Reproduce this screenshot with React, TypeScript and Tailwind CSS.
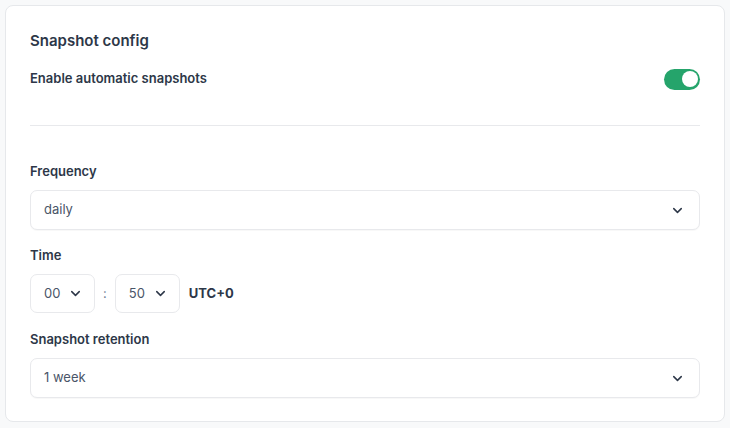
import React from "react";

function Chevron({ className = "" }: { className?: string }) {
  return (
    <svg width="15" height="15" viewBox="0 0 24 24" fill="none" stroke="#2d3748" strokeWidth="2.4" strokeLinecap="round" strokeLinejoin="round" className={className}>
      <path d="m6 9 6 6 6-6" />
    </svg>
  );
}

function Select({ value }: { value: string }) {
  return (
    <div className="flex h-[40px] items-center justify-between rounded-[7px] border border-[#e8e9ec] bg-white pl-[13px] pr-[14px] text-[13px] text-[#4a5568] shadow-[0_1px_1px_rgba(0,0,0,0.03)]">
      <span>{value}</span>
      <Chevron />
    </div>
  );
}

function SmallSelect({ value }: { value: string }) {
  return (
    <div className="flex h-[39px] w-[65px] items-center gap-[8px] rounded-[7px] border border-[#e8e9ec] bg-white pl-[13px] text-[13px] text-[#4a5568]">
      <span>{value}</span>
      <Chevron />
    </div>
  );
}

export default function App() {
  return (
    <div className="h-[428px] w-[730px] bg-[#f8f9fa] p-[5px]" style={{ fontFamily: "Inter, 'Noto Sans', sans-serif" }}>
      <div className="h-[417px] w-[720px] rounded-[8px] border border-[#e6e8eb] bg-white px-[24px] pt-[24px] text-[#2d3748]">
        <div className="text-[15px] font-semibold leading-[22px]">Snapshot config</div>
        <div className="mt-[17px] flex h-[20px] items-center justify-between">
          <span className="text-[13px] font-semibold">Enable automatic snapshots</span>
          <div className="flex h-[21px] w-[36px] items-center justify-end rounded-full bg-[#25a46b] pr-[2px]">
            <div className="h-[16px] w-[16px] rounded-full bg-white" />
          </div>
        </div>
        <div className="mt-[36px] h-px bg-[#e8e9ec]" />
        <div className="mt-[37px] text-[13px] font-semibold leading-[16px]">Frequency</div>
        <div className="mt-[11px]">
          <Select value="daily" />
        </div>
        <div className="mt-[17px] text-[13px] font-semibold leading-[16px]">Time</div>
        <div className="mt-[11px] flex items-center">
          <SmallSelect value="00" />
          <span className="mx-[8px] text-[13px] text-[#718096]">:</span>
          <SmallSelect value="50" />
          <span className="ml-[9px] text-[13px] font-bold">UTC+0</span>
        </div>
        <div className="mt-[18px] text-[13px] font-semibold leading-[16px]">Snapshot retention</div>
        <div className="mt-[11px]">
          <Select value="1 week" />
        </div>
      </div>
    </div>
  );
}
